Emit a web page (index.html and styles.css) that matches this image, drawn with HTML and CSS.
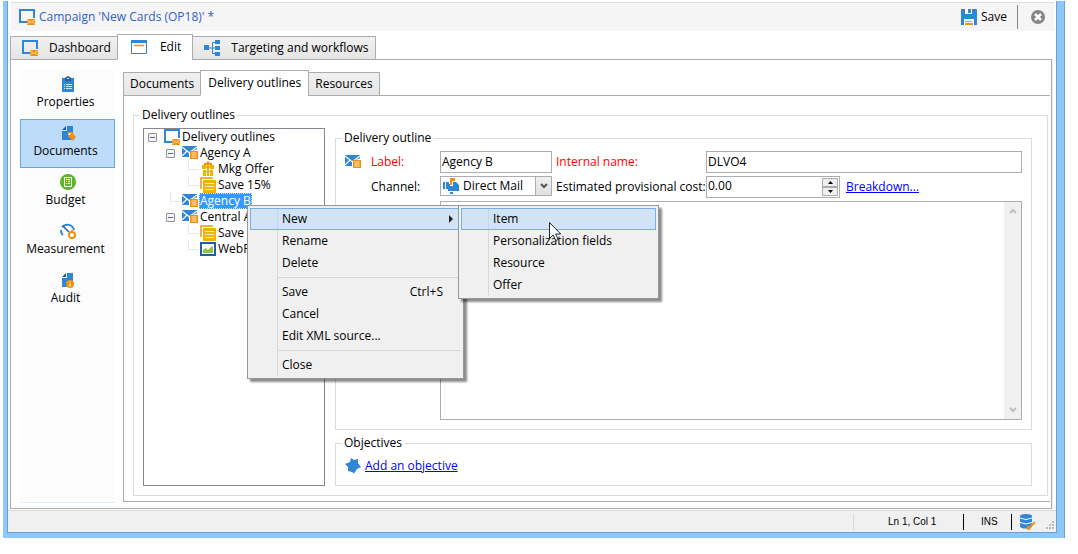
FILE: index.html
```html
<!DOCTYPE html>
<html lang="en">
<head>
    <meta charset="UTF-8">
    <meta name="viewport" content="width=device-width, initial-scale=1.0">
    <title>Campaign 'New Cards (OP18)'</title>
    <link rel="stylesheet" href="styles.css">
</head>
<body>

<!-- shared icons -->
<svg class="defs" width="0" height="0">
    <symbol id="i-campaign" viewBox="0 0 16 16">
        <path d="M8 13H1V1h14v8" fill="none" stroke="#2f86d4" stroke-width="2"/>
        <path d="M8 10h8v6H8z" fill="#f29111"/>
        <path d="M8 10.500l4 3 4-3M8 15.500l2.500-2.500M16 15.500l-2.500-2.500" fill="none" stroke="#ffd79a"/>
    </symbol>
    <symbol id="i-mail" viewBox="0 0 16 16">
        <path d="M0 1h15v11H0z" fill="#2f86d4"/>
        <path d="M0 2l7.500 6L15 2M0 11l5-5M15 11l-5-5" fill="none" stroke="#fff" stroke-width="1.200"/>
        <path d="M7 4.500h9V15H7z" fill="#fff"/>
        <path d="M7 1h8v3L9 7H7z" fill="#2f86d4"/>
        <path d="M7.500 7.500L15 2" stroke="#fff" stroke-width="1.200"/>
        <path d="M8 6h8v8H8z" fill="#f29111"/>
        <path d="M9.500 8h5M9.500 10h5M9.500 12h5" stroke="#ffe9c8"/>
    </symbol>
    <symbol id="i-pages" viewBox="0 0 16 16">
        <path d="M1 12V1h12" fill="none" stroke="#f29111" stroke-width="1.500"/>
        <path d="M3 3h13v13H3z" fill="#f0b400"/>
        <path d="M5 6.500h9M5 9.500h9M5 12.500h9" stroke="#fff3c4"/>
    </symbol>
    <symbol id="i-gift" viewBox="0 0 16 16">
        <path d="M4 4V2h2l2-2 2 2h2v2z" fill="#f29111"/>
        <path d="M2 4h4v4H2zM10 4h4v4h-4zM3 9h3v6H3zM10 9h3v6h-3z" fill="#f0b400"/>
        <path d="M7 4h2v11H7z" fill="#f0b400"/>
        <path d="M6 5h4v2H6zM6 10h4v1H6z" fill="#f0b400"/>
    </symbol>
    <symbol id="i-web" viewBox="0 0 16 16">
        <path d="M1 2h14v12H1z" fill="#fff" stroke="#1f5fa8" stroke-width="2"/>
        <path d="M3 12V9l3-2 2 2 4-4 1 1v6z" fill="#8cc63f"/>
    </symbol>
    <symbol id="i-page" viewBox="0 0 16 16">
        <path d="M7 1h6v14H2V6h5z" fill="#2f86d4"/>
        <path d="M6 1v4H2z" fill="#1f5fa8"/>
    </symbol>
    <symbol id="i-chevron" viewBox="0 0 8 6">
        <path d="M1 1l3 3 3-3" fill="none" stroke="currentColor" stroke-width="2"/>
    </symbol>
</svg>

<div class="window">
    <header class="titlebar">
        <svg class="icon"><use href="#i-campaign"/></svg>
        <h1>Campaign 'New Cards (OP18)' *</h1>
        <button class="save">
            <svg class="icon" viewBox="0 0 16 16">
                <path d="M0 0h15l1 1v15H0z" fill="#2f86d4"/>
                <path d="M4 0h7v5H4z" fill="#fff"/>
                <path d="M7 0h3v4H7z" fill="#2f86d4"/>
                <path d="M3 10h10v6H3z" fill="#fff"/>
                <path d="M4 12h7v1H4zM4 14h8v2H4z" fill="#f29111"/>
            </svg>
            Save
        </button>
        <button class="close" aria-label="Close">
            <svg width="14" height="14" viewBox="0 0 14 14">
                <circle cx="7" cy="7" r="7" fill="#858585"/>
                <path d="M4 4l6 6M10 4l-6 6" stroke="#fff" stroke-width="2.500"/>
            </svg>
        </button>
    </header>

    <nav class="tabs main-tabs">
        <button class="tab">
            <svg class="icon"><use href="#i-campaign"/></svg>Dashboard
        </button>
        <button class="tab active">
            <svg class="icon" viewBox="0 0 16 16">
                <path d="M.5 1.500h15v13H.5z" fill="#fff" stroke="#2f86d4"/>
                <path d="M0 1h16v3H0z" fill="#2f86d4"/>
                <path d="M3 6.500h10" stroke="#f29111" stroke-width="1.500"/>
            </svg>Edit
        </button>
        <button class="tab">
            <svg class="icon" viewBox="0 0 16 16">
                <path d="M5 8h6M12 2.500H8.500v11H12" fill="none" stroke="#2f86d4"/>
                <path d="M0 5h5v5H0zM11 0h5v4h-5zM11 6h5v4h-5zM11 12h5v4h-5z" fill="#2f86d4"/>
            </svg>Targeting and workflows
        </button>
    </nav>

    <div class="panel">
        <nav class="side">
            <button class="side-item">
                <svg class="icon" viewBox="0 0 16 16">
                    <path d="M2 2h12v14H2z" fill="#2f86d4"/>
                    <path d="M5 5V2l1-1 2-1 2 1 1 1v3z" fill="#1f5fa8"/>
                    <path d="M7 2h2v1H7z" fill="#fff"/>
                    <path d="M4 8.500h1M6 8.500h6M4 10.500h1M6 10.500h6M4 12.500h1M6 12.500h6" stroke="#cfe5f8"/>
                </svg>
                Properties
            </button>
            <button class="side-item selected">
                <svg class="icon" viewBox="0 0 16 16">
                    <use href="#i-page"/>
                    <path d="M8 7h4l4 5-3 4-5-5z" fill="#f29111"/>
                    <circle cx="9.500" cy="9" r="1" fill="#fff"/>
                </svg>
                Documents
            </button>
            <button class="side-item">
                <svg class="icon" viewBox="0 0 16 16">
                    <circle cx="8" cy="8" r="8" fill="#5cb531"/>
                    <path d="M4.500 3.500h7v9h-7z" fill="none" stroke="#fff"/>
                    <path d="M6 5.500h4M6 7.500h1M8 7.500h2M6 9.500h1M8 9.500h2" stroke="#fff"/>
                </svg>
                Budget
            </button>
            <button class="side-item">
                <svg class="icon" viewBox="0 0 16 16">
                    <path d="M3 12A6 6 0 0 1 1 7M2 4A7 7 0 0 1 14 7" fill="none" stroke="#2f86d4" stroke-width="2"/>
                    <path d="M3 3l6 6" stroke="#1f5fa8" stroke-width="1.500"/>
                    <circle cx="12" cy="12" r="3" fill="#fff" stroke="#f29111" stroke-width="2"/>
                    <path d="M12 7v2M12 15v1M8 12h1M15 12h1" stroke="#f29111" stroke-width="2"/>
                </svg>
                Measurement
            </button>
            <button class="side-item">
                <svg class="icon" viewBox="0 0 16 16">
                    <use href="#i-page"/>
                    <circle cx="10" cy="12" r="4" fill="#f29111"/>
                    <path d="M10 9.500v1M10 11.500v3" stroke="#ffe0ad" stroke-width="1.500"/>
                </svg>
                Audit
            </button>
        </nav>

        <main class="content">
            <nav class="tabs sub-tabs">
                <button class="tab">Documents</button>
                <button class="tab active">Delivery outlines</button>
                <button class="tab">Resources</button>
            </nav>

            <div class="sub-panel">
                <fieldset class="outlines">
                    <legend>Delivery outlines</legend>

                    <div class="tree">
                        <ul class="level root">
                            <li>
                                <div class="node"><i class="toggle"></i><svg class="icon"><use href="#i-campaign"/></svg><span>Delivery outlines</span></div>
                                <ul class="level">
                                    <li>
                                        <div class="node"><i class="toggle"></i><svg class="icon"><use href="#i-mail"/></svg><span>Agency A</span></div>
                                        <ul class="level">
                                            <li><div class="node"><i class="leaf"></i><svg class="icon"><use href="#i-gift"/></svg><span>Mkg Offer</span></div></li>
                                            <li><div class="node"><i class="leaf"></i><svg class="icon"><use href="#i-pages"/></svg><span>Save 15%</span></div></li>
                                        </ul>
                                    </li>
                                    <li>
                                        <div class="node"><i class="leaf"></i><svg class="icon"><use href="#i-mail"/></svg><span class="current">Agency B</span></div>
                                    </li>
                                    <li>
                                        <div class="node"><i class="toggle"></i><svg class="icon"><use href="#i-mail"/></svg><span>Central Agency</span></div>
                                        <ul class="level">
                                            <li><div class="node"><i class="leaf"></i><svg class="icon"><use href="#i-pages"/></svg><span>Save 15%</span></div></li>
                                            <li><div class="node"><i class="leaf"></i><svg class="icon"><use href="#i-web"/></svg><span>WebPage</span></div></li>
                                        </ul>
                                    </li>
                                </ul>
                            </li>
                        </ul>

                        <div class="menu context-menu">
                            <div class="menu-entry">
                                <button class="menu-item hover">New<svg class="arrow" width="5" height="8" viewBox="0 0 5 8"><path d="M0 0l4 4-4 4z" fill="#222"/></svg></button>
                                <div class="menu submenu">
                                    <button class="menu-item hover">Item</button>
                                    <button class="menu-item">Personalization fields</button>
                                    <button class="menu-item">Resource</button>
                                    <button class="menu-item">Offer</button>
                                    <svg class="cursor" width="12" height="19" viewBox="0 0 12 19">
                                        <path d="M.5.500v16l3.700-3.500 2.500 5.500 2.500-1-2.500-5.500h5z" fill="#fff" stroke="#1b2430"/>
                                    </svg>
                                </div>
                            </div>
                            <button class="menu-item">Rename</button>
                            <button class="menu-item">Delete</button>
                            <hr>
                            <button class="menu-item">Save<span class="shortcut">Ctrl+S</span></button>
                            <button class="menu-item">Cancel</button>
                            <button class="menu-item">Edit XML source...</button>
                            <hr>
                            <button class="menu-item">Close</button>
                        </div>
                    </div>

                    <div class="detail">
                        <fieldset class="outline-form">
                            <legend>Delivery outline</legend>
                            <svg class="icon form-icon"><use href="#i-mail"/></svg>
                            <label class="first required" for="label">Label:</label>
                            <input type="text" id="label" value="Agency B">
                            <label class="required" for="name">Internal name:</label>
                            <input type="text" id="name" value="DLVO4">

                            <label class="first" for="channel">Channel:</label>
                            <div class="select">
                                <svg class="icon" viewBox="0 0 16 16">
                                    <path d="M0 4h2v7H0zM3 4h3v7H3zM7 8h3V4h3l3 3v6H5V6h2z" fill="#2f86d4"/>
                                    <path d="M7 14h3v2H7z" fill="#2f86d4"/>
                                    <path d="M7 7V0h5v3H9v4z" fill="#f29111"/>
                                </svg>
                                <select id="channel"><option>Direct Mail</option></select>
                                <span class="drop"><svg width="8" height="6"><use href="#i-chevron"/></svg></span>
                            </div>
                            <label for="cost">Estimated provisional cost:</label>
                            <div class="cost">
                                <div class="spinner">
                                    <input type="number" id="cost" value="0.00" step="0.01">
                                    <div class="steps">
                                        <button aria-label="Increase"><svg width="5" height="3"><path d="M0 3l2.500-3L5 3z"/></svg></button>
                                        <button aria-label="Decrease"><svg width="5" height="3"><path d="M0 0l2.500 3L5 0z"/></svg></button>
                                    </div>
                                </div>
                                <a href="#">Breakdown...</a>
                            </div>

                            <div class="notes">
                                <textarea aria-label="Description"></textarea>
                                <div class="scroll">
                                    <svg class="up" width="8" height="6"><use href="#i-chevron"/></svg>
                                    <svg width="8" height="6"><use href="#i-chevron"/></svg>
                                </div>
                            </div>
                        </fieldset>

                        <fieldset class="objectives">
                            <legend>Objectives</legend>
                            <svg class="icon" viewBox="0 0 16 16">
                                <path d="M6 0l3 2 4-1v4l3 4-4 2-3 4.500L7 14l-4-1V9L0 6l5-2z" fill="#2f86d4"/>
                            </svg>
                            <a href="#">Add an objective</a>
                        </fieldset>
                    </div>
                </fieldset>
            </div>
        </main>
    </div>

    <footer class="status">
        <span class="position">Ln 1, Col 1</span>
        <span class="mode">INS</span>
        <svg class="icon" viewBox="0 0 16 16">
            <path d="M1 2h12v10H1z" fill="#2f86d4"/>
            <ellipse cx="7" cy="2" rx="6" ry="2" fill="#2f86d4"/>
            <ellipse cx="7" cy="12.500" rx="6" ry="2" fill="#2f86d4"/>
            <path d="M1 4q6 3 12 0M1 8.500q6 3 12 0" fill="none" stroke="#fff"/>
            <path d="M16 8l-5 5" stroke="#f29111" stroke-width="2"/>
            <circle cx="9.500" cy="14" r="2" fill="#f29111"/>
        </svg>
        <svg class="grip" width="9" height="9" viewBox="0 0 9 9">
            <path d="M7 0h2v2H7zM4 3h2v2H4zM7 3h2v2H7zM1 6h2v2H1zM4 6h2v2H4zM7 6h2v2H7z" fill="#bbb"/>
        </svg>
    </footer>
</div>

</body>
</html>
```

FILE: styles.css
```css
* {
    box-sizing: border-box;
}

body {
    margin: 0;
    padding: 1px 14px 16px 3px;
    min-height: 100vh;
    display: flex;
    background-color: #fff;
    color: #000;
    font-family: "Open Sans", "Noto Sans", sans-serif;
    font-size: 12px;
    line-height: 16px;
}

button,
input,
select,
textarea {
    font: inherit;
    color: inherit;
    margin: 0;
    padding: 0;
    border: none;
    border-radius: 0;
    background: none;
    outline: none;
}

a {
    color: #00f;
}

ul {
    list-style: none;
    margin: 0;
    padding: 0;
}

.defs {
    position: absolute;
}

.icon {
    width: 16px;
    height: 16px;
    flex: none;
}

/* window frame */
.window {
    flex: 1;
    display: flex;
    flex-direction: column;
    border: solid #8cc8fa;
    border-width: 0 7px 5px 4px;
    box-shadow: inset 1px 0 #6f9fcf, inset -1px -1px #6f9fcf, 1px 0 #6f9fcf;
    padding: 1px 1px 1px 1px;
}

.titlebar {
    display: flex;
    align-items: center;
    height: 29px;
    margin: 0 2px 0 3px;
    padding: 0 9px 0 8px;
    border-top: 1px solid #ddd;
    background-color: #f5f5f5;
}

.titlebar h1 {
    flex: 1;
    margin: 0 0 0 4px;
    font-size: 12px;
    font-weight: normal;
    color: #3060c8;
}

.save {
    display: flex;
    align-items: center;
    gap: 4px;
    height: 24px;
    padding-right: 10px;
    border-right: 1px solid #858585;
}

.close {
    display: flex;
    margin-left: 13px;
}

/* tabs */
.tabs {
    display: flex;
    align-items: flex-end;
    position: relative;
    z-index: 1;
}

.tab {
    display: flex;
    align-items: center;
    height: 24px;
    margin-right: -1px;
    border: 1px solid #acacac;
    background: linear-gradient(#f0f0f0, #e5e5e5);
    white-space: nowrap;
}

.tab.active {
    height: 26px;
    border-bottom-color: #fff;
    background: #fff;
}

.main-tabs {
    margin: 3px 0 -1px 2px;
}

.main-tabs .tab {
    padding: 0 6px 0 11px;
    gap: 11px;
}

.main-tabs .tab.active {
    padding: 0 11px 0 13px;
    gap: 13px;
}

.sub-tabs {
    margin-bottom: -1px;
}

.sub-tabs .tab {
    padding: 0 6px;
}

.sub-tabs .tab.active {
    padding: 0 7px;
}

.panel {
    flex: 1;
    display: flex;
    margin: 0 4px 1px 2px;
    padding: 10px 1px 5px 9px;
    border: 1px solid #acacac;
    box-shadow: 1px 0 #eee;
}

/* side navigation */
.side {
    width: 95px;
    background-color: #fcfcfc;
    border-bottom: 1px solid #e0eefb;
}

.side-item {
    display: flex;
    flex-direction: column;
    align-items: center;
    gap: 2px;
    width: 100%;
    height: 49px;
    padding: 5px 4px 0 0;
    border: 1px solid transparent;
}

.side-item .icon {
    margin-left: 4px;
}

.side-item.selected {
    border-color: #66a7e8;
    background-color: #bcdcfa;
}

.content {
    flex: 1;
    display: flex;
    flex-direction: column;
    min-width: 0;
    margin: 0 0 1px 8px;
}

.sub-panel {
    flex: 1;
    display: flex;
    padding: 11px 2px 5px 9px;
    border: solid #acacac;
    border-width: 1px 0 1px 1px;
}

/* group boxes */
fieldset {
    min-width: 0;
    margin: 0;
    border: 1px solid #dcdcdc;
}

legend {
    padding: 0 2px;
}

.outlines {
    flex: 1;
    display: flex;
    gap: 10px;
    padding: 5px 15px 9px 9px;
}

.outlines > legend,
.detail legend {
    margin-left: -3px;
}

/* tree */
.tree {
    position: relative;
    width: 182px;
    border: 1px solid #828790;
}

.level {
    position: relative;
    padding-left: 18px;
}

.level.root {
    padding-left: 4px;
}

.node {
    display: flex;
    align-items: center;
    height: 16px;
    white-space: nowrap;
}

.node span {
    margin-left: 1px;
    padding: 0 1px;
}

.node .current {
    background-color: #3399ff;
    color: #fff;
    outline: 1px dotted #cce4ff;
    outline-offset: -1px;
}

.toggle,
.leaf {
    flex: none;
    width: 16px;
    height: 9px;
    position: relative;
}

.toggle {
    width: 9px;
    margin-right: 7px;
    border: 1px solid #919191;
    border-radius: 1px;
    background: linear-gradient(#4b63a7, #4b63a7) center / 5px 1px no-repeat #f4f4f4;
}

.leaf::before {
    content: "";
    position: absolute;
    left: 4px;
    top: -4px;
    width: 10px;
    height: 8px;
    border: solid #e8e8e8;
    border-width: 0 0 1px 1px;
}

/* menus */
.menu {
    position: absolute;
    z-index: 2;
    padding: 2px;
    border: 1px solid #979797;
    background: linear-gradient(#d7d7d7, #d7d7d7) 29px 2px / 1px calc(100% - 4px) no-repeat #f0f0f0;
    box-shadow: 3px 3px 2px rgba(0, 0, 0, 0.45);
}

.context-menu {
    left: 103px;
    top: 76px;
    width: 217px;
}

.menu-entry {
    position: relative;
}

.submenu {
    left: 208px;
    top: -3px;
    width: 201px;
}

.menu-item {
    display: flex;
    align-items: center;
    justify-content: space-between;
    width: 100%;
    height: 22px;
    padding: 0 6px 0 31px;
    border: 1px solid transparent;
    white-space: nowrap;
}

.menu-item.hover {
    border-color: #78aee5;
    background-color: rgba(180, 215, 245, 0.5);
}

.shortcut {
    margin-right: 11px;
}

.menu hr {
    height: 1px;
    margin: 3px 0 3px 28px;
    border: none;
    background-color: #d7d7d7;
}

.cursor {
    position: absolute;
    left: 90px;
    top: 16px;
}

/* form */
.detail {
    flex: 1;
    display: flex;
    flex-direction: column;
    gap: 5px;
    min-width: 0;
    padding-top: 2px;
}

.outline-form {
    flex: 1;
    display: grid;
    grid-template-columns: 16px 71px 112px 146px 1fr;
    grid-template-rows: 22px 22px 1fr;
    gap: 3px 4px;
    align-items: center;
    padding: 5px 9px 9px;
    white-space: nowrap;
}

.outline-form .first {
    grid-column: 2;
    padding-left: 6px;
}

.required {
    color: #f00;
}

input[type="text"],
.select,
.spinner {
    width: 100%;
    height: 22px;
    border: 1px solid #abadb3;
}

input[type="text"] {
    padding: 0 1px 2px;
}

.select {
    display: flex;
    align-items: center;
    align-self: start;
    position: relative;
    height: 20px;
    padding-left: 2px;
}

.select select {
    flex: 1;
    min-width: 0;
    height: 18px;
    padding-left: 4px;
    appearance: none;
}

.drop {
    position: absolute;
    right: 0;
    top: 0;
    bottom: 0;
    width: 16px;
    display: flex;
    align-items: center;
    justify-content: center;
    border-left: 1px solid #acacac;
    background: linear-gradient(#f0f0f0, #e0e0e0);
    color: #555;
    pointer-events: none;
}

.cost {
    display: flex;
    align-items: center;
    gap: 6px;
}

.spinner {
    display: flex;
    width: 134px;
    padding: 1px;
}

.spinner input {
    flex: 1;
    min-width: 0;
    padding-bottom: 2px;
    appearance: textfield;
}

.spinner input::-webkit-inner-spin-button {
    display: none;
}

.steps {
    display: flex;
    flex-direction: column;
    width: 16px;
}

.steps button {
    flex: 1;
    display: flex;
    align-items: center;
    justify-content: center;
    border: 1px solid #acacac;
    background-color: #efefef;
}

.notes {
    grid-column: 3 / -1;
    align-self: stretch;
    display: flex;
    border: 1px solid #abadb3;
}

.notes textarea {
    flex: 1;
    resize: none;
}

.scroll {
    display: flex;
    flex-direction: column;
    justify-content: space-between;
    align-items: center;
    width: 17px;
    padding: 6px 0;
    background-color: #f0f0f0;
    color: #bfbfbf;
}

.up {
    transform: rotate(180deg);
}

.objectives {
    display: flex;
    align-items: center;
    gap: 4px;
    height: 51px;
    padding: 7px 9px 12px;
}

/* status bar */
.status {
    display: flex;
    align-items: center;
    justify-content: flex-end;
    height: 22px;
    border-top: 1px solid #d7d7d7;
    background-color: #f0f0f0;
    font-family: "Liberation Sans", Arial, sans-serif;
    font-size: 10px;
}

.position {
    width: 110px;
    padding-left: 34px;
    border-right: 1px solid #000;
    box-shadow: -1px 0 #d7d7d7;
}

.mode {
    width: 48px;
    padding-left: 17px;
    border-right: 1px solid #000;
}

.status .icon {
    margin-left: 7px;
}

.grip {
    align-self: flex-end;
    margin: 0 2px 2px 10px;
}
```
